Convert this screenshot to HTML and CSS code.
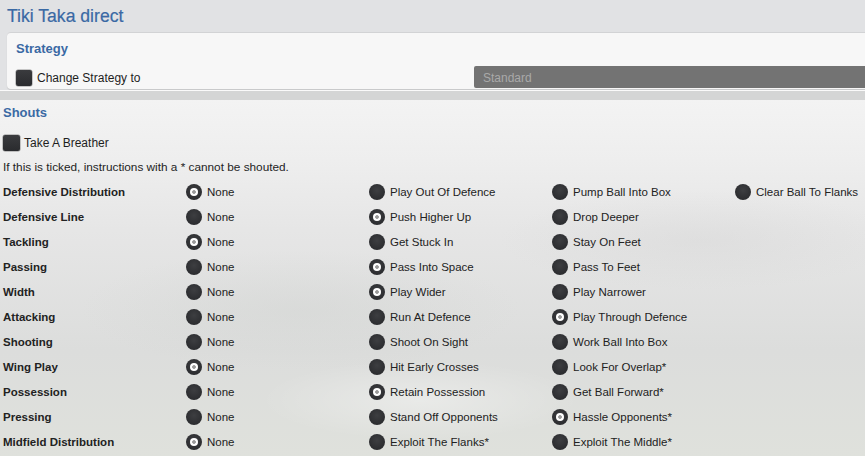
FILE: index.html
```html
<!DOCTYPE html>
<html>
<head>
<meta charset="utf-8">
<link rel="stylesheet" href="styles.css">
</head>
<body>
<div class="page">
  <h1 class="title">Tiki Taka direct</h1>
  <div class="panel">
    <div class="panel-head">Strategy</div>
    <div class="panel-row">
      <label class="check"><span class="box"></span>Change Strategy to</label>
      <div class="select">Standard</div>
    </div>
  </div>
  <div class="band"></div>
  <div class="shouts">
    <div class="shouts-head">Shouts</div>
    <label class="check breather"><span class="box"></span>Take A Breather</label>
    <div class="info">If this is ticked, instructions with a * cannot be shouted.</div>
    <div class="grid">
      <div class="lbl">Defensive Distribution</div>
      <div class="opt"><span class="radio on"></span>None</div>
      <div class="opt"><span class="radio"></span>Play Out Of Defence</div>
      <div class="opt"><span class="radio"></span>Pump Ball Into Box</div>
      <div class="opt"><span class="radio"></span>Clear Ball To Flanks</div>

      <div class="lbl">Defensive Line</div>
      <div class="opt"><span class="radio"></span>None</div>
      <div class="opt"><span class="radio on"></span>Push Higher Up</div>
      <div class="opt"><span class="radio"></span>Drop Deeper</div>
      <div class="opt"></div>

      <div class="lbl">Tackling</div>
      <div class="opt"><span class="radio on"></span>None</div>
      <div class="opt"><span class="radio"></span>Get Stuck In</div>
      <div class="opt"><span class="radio"></span>Stay On Feet</div>
      <div class="opt"></div>

      <div class="lbl">Passing</div>
      <div class="opt"><span class="radio"></span>None</div>
      <div class="opt"><span class="radio on"></span>Pass Into Space</div>
      <div class="opt"><span class="radio"></span>Pass To Feet</div>
      <div class="opt"></div>

      <div class="lbl">Width</div>
      <div class="opt"><span class="radio"></span>None</div>
      <div class="opt"><span class="radio on"></span>Play Wider</div>
      <div class="opt"><span class="radio"></span>Play Narrower</div>
      <div class="opt"></div>

      <div class="lbl">Attacking</div>
      <div class="opt"><span class="radio"></span>None</div>
      <div class="opt"><span class="radio"></span>Run At Defence</div>
      <div class="opt"><span class="radio on"></span>Play Through Defence</div>
      <div class="opt"></div>

      <div class="lbl">Shooting</div>
      <div class="opt"><span class="radio"></span>None</div>
      <div class="opt"><span class="radio"></span>Shoot On Sight</div>
      <div class="opt"><span class="radio"></span>Work Ball Into Box</div>
      <div class="opt"></div>

      <div class="lbl">Wing Play</div>
      <div class="opt"><span class="radio on"></span>None</div>
      <div class="opt"><span class="radio"></span>Hit Early Crosses</div>
      <div class="opt"><span class="radio"></span>Look For Overlap*</div>
      <div class="opt"></div>

      <div class="lbl">Possession</div>
      <div class="opt"><span class="radio"></span>None</div>
      <div class="opt"><span class="radio on"></span>Retain Possession</div>
      <div class="opt"><span class="radio"></span>Get Ball Forward*</div>
      <div class="opt"></div>

      <div class="lbl">Pressing</div>
      <div class="opt"><span class="radio"></span>None</div>
      <div class="opt"><span class="radio"></span>Stand Off Opponents</div>
      <div class="opt"><span class="radio on"></span>Hassle Opponents*</div>
      <div class="opt"></div>

      <div class="lbl">Midfield Distribution</div>
      <div class="opt"><span class="radio on"></span>None</div>
      <div class="opt"><span class="radio"></span>Exploit The Flanks*</div>
      <div class="opt"><span class="radio"></span>Exploit The Middle*</div>
      <div class="opt"></div>
    </div>
  </div>
</div>
</body>
</html>
```

FILE: styles.css
```css
html, body {
  margin: 0;
  padding: 0;
  overflow: hidden;
  height: 100%;
}
body {
  background: #e1e2e4;
  font-family: "Liberation Sans", Arial, sans-serif;
  color: #1e1e1e;
}
.page {
  width: 865px;
  height: 456px;
  overflow: hidden;
  display: flex;
  flex-direction: column;
}
.title {
  margin: 0;
  height: 32px;
  padding: 0 7px;
  font-size: 17.6px;
  font-weight: normal;
  line-height: 33px;
  color: #3a69a4;
  box-sizing: border-box;
  -webkit-text-stroke: 0.2px #3a69a4;
}
.panel {
  margin-left: 7px;
  margin-right: -20px;
  height: 56px;
  background: #f7f7f7;
  border-radius: 4px;
  border-top: 1px solid #d2d3d5;
  box-shadow: 0 1px 1px rgba(0,0,0,0.12);
  display: flex;
  flex-direction: column;
}
.panel-head {
  height: 33px;
  padding-left: 9px;
  font-size: 13px;
  font-weight: bold;
  color: #3a69a4;
  line-height: 32px;
}
.panel-row {
  display: flex;
  align-items: center;
  height: 22px;
}
.check {
  display: flex;
  align-items: center;
  font-size: 12px;
  color: #1e1e1e;
}
.panel-row .check {
  padding-left: 9px;
  width: 458px;
  padding-top: 2px;
}
.box {
  width: 16px;
  height: 16px;
  border-radius: 2px;
  background: linear-gradient(#3a3b3e, #2a2b2e);
  margin-right: 5px;
  box-shadow: 0 0 0 0.5px rgba(0,0,0,0.4);
}
.select {
  flex: 1;
  height: 22px;
  background: #737373;
  border-radius: 2px 0 0 2px;
  color: #a9a9a9;
  font-size: 12px;
  line-height: 24px;
  padding-left: 9px;
}
.band {
  height: 9px;
  margin-top: 1px;
  background: #d4d5d5;
  border-top: 1px solid #fafafa;
}
.shouts {
  flex: 1;
  padding-left: 3px;
  background:
    radial-gradient(ellipse 160px 40px at 420px 300px, rgba(255,255,255,0.35), transparent),
    radial-gradient(ellipse 200px 50px at 700px 140px, rgba(210,210,210,0.35), transparent),
    radial-gradient(ellipse 220px 60px at 300px 210px, rgba(205,208,205,0.35), transparent),
    linear-gradient(#f3f3f3 0px, #eeeeee 60px, #e6e6e6 130px, #dcdddc 250px, #dfe1dc 357px);
}
.shouts-head {
  font-size: 13px;
  font-weight: bold;
  color: #3a69a4;
  height: 28px;
  line-height: 26px;
}
.breather {
  height: 24px;
  padding-top: 3px;
}
.breather .box {
  width: 17px;
  margin-right: 4px;
}
.info {
  font-size: 11.8px;
  height: 24px;
  line-height: 24px;
}
.grid {
  display: grid;
  grid-template-columns: 183px 183px 183px 183px 183px;
  grid-auto-rows: 25px;
  align-items: center;
}
.lbl {
  font-size: 11.5px;
  font-weight: bold;
  color: #222;
}
.opt {
  display: flex;
  align-items: center;
  font-size: 11.5px;
  color: #222;
}
.radio {
  width: 16px;
  height: 16px;
  border-radius: 50%;
  background: radial-gradient(circle at 50% 40%, #3d3e41, #252629);
  margin-right: 5px;
  position: relative;
  flex: none;
}
.radio.on::after {
  content: "";
  position: absolute;
  left: 4px;
  top: 4px;
  width: 8px;
  height: 8px;
  border-radius: 50%;
  background: radial-gradient(circle, #9a9a9a 0 1.5px, #ffffff 2.2px);
}
```
